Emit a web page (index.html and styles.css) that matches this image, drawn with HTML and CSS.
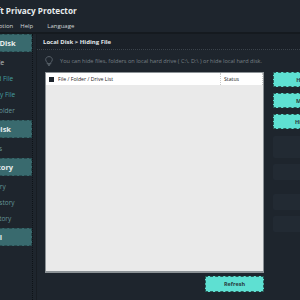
FILE: index.html
```html
<html>
    <head>
        <link rel="stylesheet" href="styles.css">
    </head>
    <body>
        <div class="window">
            <div id="titlebar">
                <span class="title">GiliSoft Privacy Protector</span>
            </div>
            <div id="menubar">
                <span class="menu first">Option</span>
                <span class="menu">Help</span>
                <span class="menu">Language</span>
            </div>
            <div id="body">
                <div id="sidebar">
                    <div class="group">Local Disk</div>
                    <div class="item light">Safe Mode</div>
                    <div class="item">Password File</div>
                    <div class="item">Read-Only File</div>
                    <div class="item dim">Hidden Folder</div>

                    <div class="group">USB Disk</div>
                    <div class="item dim">USB Disks</div>

                    <div class="group">Directory</div>
                    <div class="item dim">File History</div>
                    <div class="item dim">Folder History</div>
                    <div class="item dim">Drive History</div>

                    <div class="group">Global</div>
                    <div class="item dim">Settings</div>
                </div>
                <div id="main">
                    <div id="crumb">Local Disk &gt; Hiding File</div>
                    <div id="tip">
                        <svg class="bulb" width="8" height="10" viewBox="0 0 8 10">
                            <path d="M4 0.6C2 0.6 0.7 2 0.7 3.7c0 1.3 0.8 2 1.4 2.7v1.2h3.8V6.4c0.6-0.7 1.4-1.4 1.4-2.7C7.3 2 6 0.6 4 0.6z" fill="none" stroke="#5f6870" stroke-width="0.9"/>
                            <path d="M2.6 8.4h2.8M3 9.4h2" stroke="#5f6870" stroke-width="0.8"/>
                        </svg>
                        <span>You can hide files, folders on local hard drive ( C:\, D:\ ) or hide local hard disk.</span>
                    </div>
                    <div id="content">
                        <div class="left">
                            <div class="list">
                                <div class="listHead">
                                    <span class="check"></span>
                                    <span class="colName">File / Folder / Drive List</span>
                                    <span class="colStatus">Status</span>
                                </div>
                                <div class="listBody"></div>
                            </div>
                            <div class="footer">
                                <button type="button" class="teal refresh">Refresh</button>
                            </div>
                        </div>
                        <div class="right">
                            <button type="button" class="teal">Hide File</button>
                            <button type="button" class="teal">Move Up</button>
                            <button type="button" class="teal">Hide Disk</button>
                            <div class="card tall"></div>
                            <div class="card">Status</div>
                            <div class="card gapTop"></div>
                            <div class="card"></div>
                        </div>
                    </div>
                </div>
            </div>
        </div>
    </body>
</html>
```

FILE: styles.css
```css
body{
    margin: 0;
    background: rgb(30, 37, 45);
    overflow: hidden;
    font-family: "Open Sans", "Liberation Sans", sans-serif;
}
.window{
    margin-left: -70px;
    width: 440px;
    height: 300px;
    display: flex;
    flex-direction: column;
}
#titlebar{
    height: 20px;
    display: flex;
    align-items: center;
}
.title{
    font-size: 8.2px;
    font-weight: bold;
    color: rgb(232, 236, 238);
    padding-left: 44px;
}
#menubar{
    height: 12px;
    display: flex;
    align-items: center;
    font-size: 6px;
    color: rgb(210, 214, 216);
}
.menu{
    margin-right: 14px;
}
.menu.first{
    padding-left: 64px;
    margin-right: 7px;
}
#body{
    flex: 1;
    display: flex;
    border-top: 2px solid rgb(21, 26, 31);
}
#sidebar{
    width: 102px;
    border-right: 1px dotted rgb(14, 18, 22);
    display: flex;
    flex-direction: column;
}
.group{
    height: 18px;
    margin-top: 2px;
    margin-bottom: 2px;
    background: rgb(57, 106, 110);
    border: 1px dashed rgb(40, 76, 80);
    box-sizing: border-box;
    display: flex;
    align-items: center;
    padding-left: 47px;
    font-size: 7.5px;
    font-weight: bold;
    color: rgb(230, 236, 236);
}
.group:first-child{
    margin-top: 0;
}
.item{
    height: 16px;
    display: flex;
    align-items: center;
    padding-left: 42px;
    font-size: 6.5px;
    color: rgb(70, 160, 160);
}
.item.light{
    color: rgb(190, 198, 200);
}
.item.dim{
    color: rgb(100, 150, 152);
}
#main{
    flex: 1;
    display: flex;
    flex-direction: column;
    margin-left: 3px;
    border-left: 1px solid rgb(24, 29, 35);
}
#crumb{
    height: 15px;
    display: flex;
    align-items: center;
    padding-left: 6px;
    font-size: 6px;
    font-weight: bold;
    color: rgb(225, 230, 232);
    background: rgb(27, 33, 40);
    border-bottom: 1px dotted rgb(60, 68, 76);
}
#tip{
    height: 22px;
    display: flex;
    align-items: center;
    padding-left: 8px;
    font-size: 5.6px;
    color: rgb(120, 128, 134);
}
.bulb{
    margin-right: 7px;
}
#content{
    display: flex;
    padding-left: 8px;
}
.left{
    width: 219px;
    display: flex;
    flex-direction: column;
}
.list{
    height: 198px;
    display: flex;
    flex-direction: column;
    border: 1px solid rgb(140, 146, 150);
    border-bottom-width: 2px;
    background: rgb(234, 234, 234);
}
.listHead{
    height: 12px;
    display: flex;
    align-items: center;
    background: rgb(255, 255, 255);
    font-size: 5.2px;
    color: rgb(30, 30, 30);
}
.check{
    width: 5px;
    height: 5px;
    background: rgb(30, 37, 45);
    margin-left: 3px;
    margin-right: 4px;
}
.colName{
    flex: 1;
}
.colStatus{
    width: 43px;
    border-left: 1px dotted rgb(200, 200, 200);
    border-right: 1px dotted rgb(200, 200, 200);
    height: 12px;
    display: flex;
    align-items: center;
    padding-left: 3px;
    box-sizing: border-box;
}
.footer{
    display: flex;
    justify-content: flex-end;
    padding-top: 3px;
}
button{
    font-family: "Open Sans", "Liberation Sans", sans-serif;
    border: 1px dashed rgb(40, 90, 86);
    padding: 0;
    margin: 0;
}
.teal{
    background: rgb(94, 224, 210);
    color: rgb(40, 56, 60);
    font-size: 5.5px;
    font-weight: bold;
}
.refresh{
    width: 59px;
    height: 16px;
}
.right{
    width: 70px;
    margin-left: 9px;
    display: flex;
    flex-direction: column;
    gap: 6px;
}
.right .teal{
    height: 15px;
}
.card{
    height: 16px;
    background: rgb(34, 42, 51);
    border-radius: 2px;
    font-size: 5.5px;
    color: rgb(130, 136, 140);
    display: flex;
    align-items: center;
    justify-content: center;
}
.card.tall{
    height: 22px;
    margin-top: 1px;
}
.card.gapTop{
    margin-top: 8px;
}
```
